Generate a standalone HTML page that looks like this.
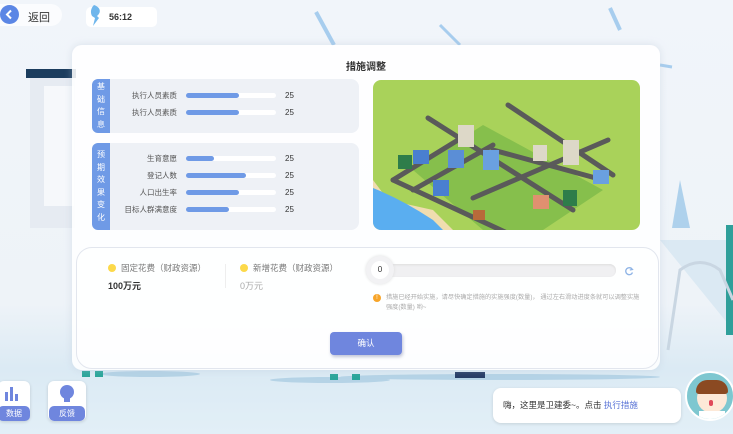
<!DOCTYPE html>
<html><head><meta charset="utf-8"><style>
*{margin:0;padding:0;box-sizing:border-box}
body{width:733px;height:434px;overflow:hidden;position:relative;font-family:"Liberation Sans","Noto Sans CJK SC",sans-serif;background:linear-gradient(#f1f5fa 0%,#eef3f8 70%,#dbeaf4 85%,#e2eff7 100%);}
.abs{position:absolute}
.modal{left:72px;top:45px;width:588px;height:325px;background:rgba(255,255,255,0.88);border-radius:10px;box-shadow:0 0 8px rgba(180,195,215,.4)}
.title{left:0;width:588px;top:13px;text-align:center;font-size:10px;font-weight:bold;color:#333}
.card{background:#eef1f6;border-radius:8px}
.tab{background:#6f9ae6;color:#fff;font-size:8px;line-height:12.5px;text-align:center;border-radius:6px 0 0 6px;display:flex;align-items:center;justify-content:center}
.lbl{font-size:7.5px;color:#555;text-align:right;width:80px}
.bar{width:90px;height:5px;background:#fff;border-radius:3px}
.bar i{display:block;height:5px;background:#6f9ae6;border-radius:3px}
.num{font-size:8px;color:#333}
.bottom{left:76px;top:247px;width:583px;height:122px;border:1.5px solid #e2e6ee;border-radius:16px;background:rgba(255,255,255,.6)}
</style></head><body>
<!-- background decorations -->
<div class="abs" style="left:26px;top:69px;width:50px;height:9px;background:#1c3d5e"></div>
<div class="abs" style="left:30px;top:78px;width:45px;height:150px;background:#e6ebf2"></div>
<div class="abs" style="left:44px;top:86px;width:30px;height:120px;background:#f6f8fb"></div>
<svg class="abs" style="left:0;top:0" width="733" height="434">
<line x1="316" y1="12" x2="334" y2="45" stroke="#a7cdee" stroke-width="4"/>
<line x1="440" y1="25" x2="460" y2="45" stroke="#a7cdee" stroke-width="3"/>
<line x1="610" y1="8" x2="620" y2="30" stroke="#a7cdee" stroke-width="4"/>
<line x1="660" y1="65" x2="672" y2="67" stroke="#a7cdee" stroke-width="3"/>
<polygon points="680,180 672,228 690,228" fill="#aed1ec"/>
<polygon points="660,240 733,330 733,240" fill="#dbe9f3"/>
<rect x="726" y="225" width="7" height="110" fill="#2f9f9a"/>
<path d="M668 350 L680 270 Q700 255 720 270 L733 300" stroke="#c9d6e2" stroke-width="3" fill="none"/>
<ellipse cx="150" cy="374" rx="50" ry="3" fill="#b5d3e6"/>
<ellipse cx="330" cy="380" rx="60" ry="3" fill="#b5d3e6"/>
<ellipse cx="500" cy="377" rx="160" ry="3" fill="#b5d3e6"/>
<rect x="82" y="371" width="8" height="6" fill="#2aa59a"/><rect x="95" y="371" width="8" height="6" fill="#2aa59a"/>
<rect x="330" y="374" width="8" height="6" fill="#2aa59a"/><rect x="352" y="374" width="8" height="6" fill="#2aa59a"/>
<rect x="455" y="372" width="30" height="6" fill="#263d66"/>
</svg>
<!-- top bar -->
<div class="abs" style="left:0;top:4px;width:62px;height:22px;background:rgba(255,255,255,.7);border-radius:0 11px 11px 0"></div>
<div class="abs" style="left:0;top:5px;width:19px;height:19px;border-radius:50%;background:#5b86e5"></div>
<svg class="abs" style="left:4px;top:9px" width="10" height="11"><path d="M7 1.5 L3 5.5 L7 9.5" stroke="#fff" stroke-width="2" fill="none"/></svg>
<div class="abs" style="left:28px;top:9px;font-size:11px;color:#333">返回</div>
<div class="abs" style="left:86px;top:7px;width:71px;height:20px;background:#fff;border-radius:5px"></div>
<svg class="abs" style="left:88px;top:4px" width="16" height="24"><path d="M6 1 C12 3 14 8 9 12 L11 14 L5 22 L7 14 L4 12 C2 8 3 4 6 1Z" fill="#6fb6ec"/></svg>
<div class="abs" style="left:109px;top:12px;font-size:9px;font-weight:bold;color:#333">56:12</div>
<!-- modal -->
<div class="abs modal">
 <div class="abs title">措施调整</div>
</div>
<div class="abs card" style="left:92px;top:79px;width:267px;height:54px"></div>
<div class="abs tab" style="left:92px;top:79px;width:18px;height:54px">基<br>础<br>信<br>息</div>
<div class="abs card" style="left:92px;top:143px;width:267px;height:87px"></div>
<div class="abs tab" style="left:92px;top:143px;width:18px;height:87px">预<br>期<br>效<br>果<br>变<br>化</div>
<!-- rows -->
<div class="abs" style="left:97px;top:90px;display:flex;align-items:center;gap:9px"><div class="lbl">执行人员素质</div><div class="bar"><i style="width:53px"></i></div><div class="num">25</div></div>
<div class="abs" style="left:97px;top:107px;display:flex;align-items:center;gap:9px"><div class="lbl">执行人员素质</div><div class="bar"><i style="width:53px"></i></div><div class="num">25</div></div>
<div class="abs" style="left:97px;top:153px;display:flex;align-items:center;gap:9px"><div class="lbl">生育意愿</div><div class="bar"><i style="width:28px"></i></div><div class="num">25</div></div>
<div class="abs" style="left:97px;top:170px;display:flex;align-items:center;gap:9px"><div class="lbl">登记人数</div><div class="bar"><i style="width:60px"></i></div><div class="num">25</div></div>
<div class="abs" style="left:97px;top:187px;display:flex;align-items:center;gap:9px"><div class="lbl">人口出生率</div><div class="bar"><i style="width:53px"></i></div><div class="num">25</div></div>
<div class="abs" style="left:97px;top:204px;display:flex;align-items:center;gap:9px"><div class="lbl">目标人群满意度</div><div class="bar"><i style="width:43px"></i></div><div class="num">25</div></div>
<!-- map -->
<svg class="abs" style="left:373px;top:80px;border-radius:8px" width="267" height="150">
<rect width="267" height="150" fill="#a9d25a"/>
<polygon points="15,120 0,100 0,150 80,150 60,130" fill="#f0ddb0"/>
<path d="M0 108 Q30 120 60 140 L70 150 L0 150Z" fill="#5aaef0"/>
<polygon points="40,90 110,45 230,110 170,150 110,150" fill="#86bf4c"/>
<g stroke="#5a5a5a" stroke-width="5" stroke-linecap="round" fill="none">
<line x1="20" y1="100" x2="85" y2="60"/>
<line x1="40" y1="110" x2="120" y2="65"/>
<line x1="55" y1="38" x2="200" y2="130"/>
<line x1="20" y1="100" x2="160" y2="165"/>
<line x1="120" y1="70" x2="230" y2="100"/>
<line x1="135" y1="25" x2="240" y2="95"/>
<line x1="100" y1="118" x2="235" y2="60"/>
</g>
<g>
<rect x="85" y="45" width="16" height="22" fill="#ddd8c8"/><rect x="190" y="60" width="16" height="25" fill="#ddd8c8"/><rect x="75" y="70" width="16" height="18" fill="#5b8ed6"/>
<rect x="40" y="70" width="16" height="14" fill="#4a7fd0"/><rect x="110" y="70" width="16" height="20" fill="#6aa0e0"/><rect x="60" y="100" width="16" height="16" fill="#4a7fd0"/>
<rect x="160" y="65" width="14" height="16" fill="#ddd8c8"/><rect x="100" y="130" width="12" height="10" fill="#b86a3a"/><rect x="25" y="75" width="14" height="14" fill="#2e7d4a"/><rect x="190" y="110" width="14" height="16" fill="#2e7d4a"/><rect x="220" y="90" width="16" height="14" fill="#6aa0e0"/><rect x="160" y="115" width="16" height="14" fill="#e09070"/>
</g>
</svg>
<!-- bottom panel -->
<div class="abs bottom"></div>
<div class="abs" style="left:108px;top:264px;width:8px;height:8px;border-radius:50%;background:#fcd94a"></div>
<div class="abs" style="left:121px;top:262px;font-size:8.5px;color:#777">固定花费（财政资源）</div>
<div class="abs" style="left:108px;top:279px;font-size:9px;font-weight:bold;color:#333">100万元</div>
<div class="abs" style="left:225px;top:264px;width:1px;height:24px;background:#eee"></div>
<div class="abs" style="left:240px;top:264px;width:8px;height:8px;border-radius:50%;background:#fcd94a"></div>
<div class="abs" style="left:253px;top:262px;font-size:8.5px;color:#777">新增花费（财政资源）</div>
<div class="abs" style="left:240px;top:279px;font-size:9px;color:#aaa">0万元</div>
<div class="abs" style="left:372px;top:264px;width:244px;height:13px;background:#f0f0f2;border-radius:7px;box-shadow:inset 0 1px 2px #ddd"></div>
<div class="abs" style="left:366px;top:256px;width:28px;height:28px;border-radius:50%;background:#f2f2f4;box-shadow:0 0 3px #ddd"></div>
<div class="abs" style="left:371px;top:261px;width:18px;height:18px;border-radius:50%;background:#fff;font-size:8px;line-height:18px;text-align:center;color:#333">0</div>
<svg class="abs" style="left:624px;top:266px" width="10" height="10"><path d="M8 3 A3.5 3.5 0 1 0 8.5 6.5" stroke="#8fb4e6" stroke-width="1.4" fill="none"/><path d="M6.5 1.5 L8.5 3.5 L5.8 4" stroke="#8fb4e6" stroke-width="1.2" fill="none"/></svg>
<div class="abs" style="left:373px;top:294px;width:8px;height:8px;border-radius:50%;background:#f7a52a;color:#fff;font-size:6px;line-height:8px;text-align:center">!</div>
<div class="abs" style="left:386px;top:293px;width:256px;font-size:6.2px;line-height:10px;color:#aaa">措施已经开始实施，请尽快确定措施的实施强度(数量)， 通过左右滑动进度条就可以调整实施强度(数量) 哟~</div>
<div class="abs" style="left:330px;top:332px;width:72px;height:23px;background:#6f86de;border-radius:4px;box-shadow:1px 2px 3px rgba(80,90,140,.35);color:#fff;font-size:8.5px;text-align:center;line-height:23px">确认</div>
<!-- bottom left buttons -->
<div class="abs" style="left:-2px;top:381px;width:32px;height:40px;background:#fff;border-radius:6px;box-shadow:0 1px 3px rgba(0,0,0,.15)"></div>
<svg class="abs" style="left:4px;top:386px" width="16" height="16"><rect x="1" y="6" width="3" height="9" fill="#6f86de"/><rect x="6" y="1" width="3" height="14" fill="#6f86de"/><rect x="11" y="8" width="3" height="7" fill="#6f86de"/></svg>
<div class="abs" style="left:-2px;top:406px;width:32px;height:15px;background:#6f86de;border-radius:5px;color:#fff;font-size:8px;text-align:center;line-height:15px">数据</div>
<div class="abs" style="left:48px;top:381px;width:38px;height:40px;background:#fff;border-radius:6px;box-shadow:0 1px 3px rgba(0,0,0,.15)"></div>
<svg class="abs" style="left:58px;top:384px" width="18" height="20"><circle cx="9" cy="8" r="7" fill="#6f86de"/><rect x="6" y="14" width="6" height="4" fill="#6f86de"/></svg>
<div class="abs" style="left:49px;top:406px;width:36px;height:15px;background:#6f86de;border-radius:5px;color:#fff;font-size:8px;text-align:center;line-height:15px">反馈</div>
<!-- speech bubble -->
<div class="abs" style="left:493px;top:388px;width:188px;height:35px;background:#fff;border-radius:8px;box-shadow:0 1px 3px rgba(0,0,0,.12)"></div>
<div class="abs" style="left:503px;top:399px;font-size:8.5px;color:#333">嗨，这里是卫建委~。点击 <span style="color:#5a74d6">执行措施</span></div>
<!-- avatar -->
<div class="abs" style="left:685px;top:371px;width:50px;height:50px;border-radius:50%;background:#7ec7d0;border:2px solid #fff;overflow:hidden">
<div class="abs" style="left:10px;top:10px;width:30px;height:30px;border-radius:50%;background:#fde9d8"></div>
<div class="abs" style="left:9px;top:7px;width:32px;height:14px;border-radius:16px 16px 4px 4px;background:#8b4a22"></div>
<div class="abs" style="left:22px;top:27px;width:4px;height:6px;border-radius:2px;background:#e0485a"></div>
<div class="abs" style="left:12px;top:38px;width:26px;height:12px;background:#fff"></div>
</div>
</body></html>
